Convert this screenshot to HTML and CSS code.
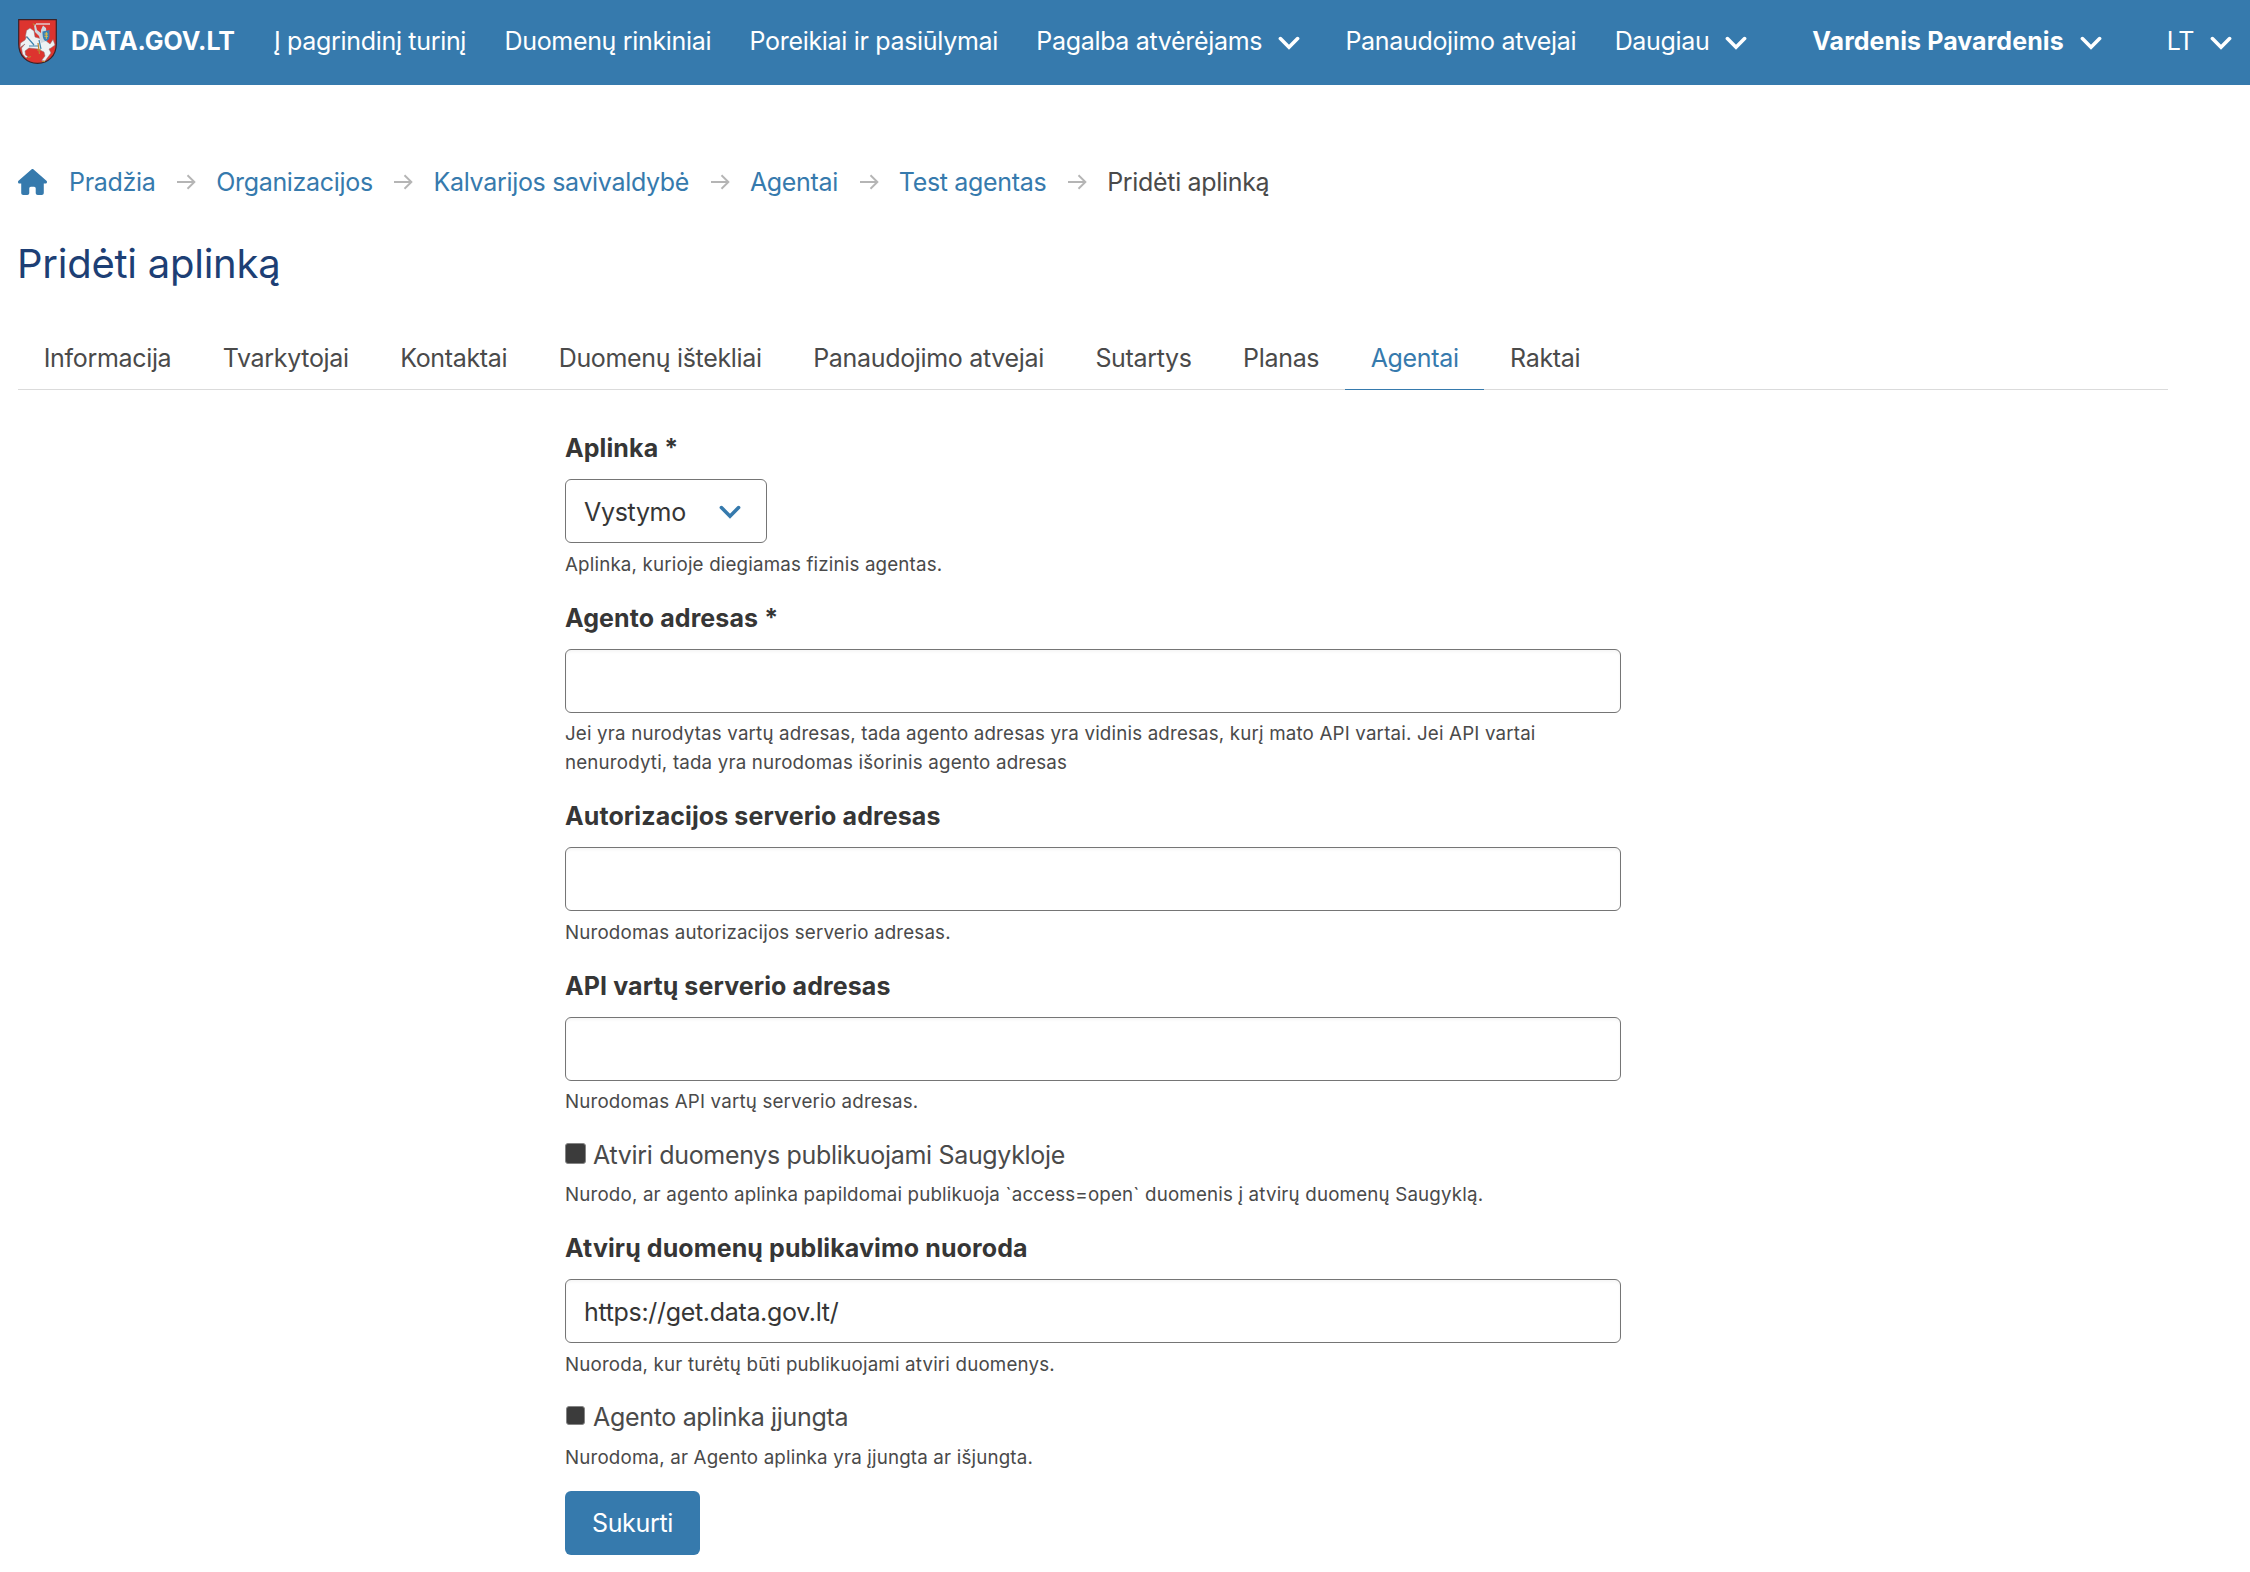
FILE: index.html
```html
<!DOCTYPE html>
<html lang="lt">
<head>
  <meta charset="utf-8">
  <title>Pridėti aplinką</title>
  <link rel="stylesheet" href="styles.css">
</head>
<body>
  <svg class="symbols" width="0" height="0">
    <symbol id="chevron" viewBox="0 0 22 14"><path d="M2.4 2.6 L11 11.2 L19.6 2.6" fill="none" stroke="currentColor" stroke-width="3.6" stroke-linecap="round"/></symbol>
    <symbol id="arrow" viewBox="0 0 20 16"><path d="M1 8 H18 M11.5 1.2 L18.4 8 L11.5 14.8" fill="none" stroke="currentColor" stroke-width="1.9"/></symbol>
  </svg>

  <nav class="navbar">
    <a class="brand" href="#">
      <svg class="logo" viewBox="0 0 39 45">
        <path d="M.7 .7 H38.3 V25 C38.3 37 30 44.3 19.5 44.3 S.7 37 .7 25 Z" fill="#dd342f" stroke="#3a2228" stroke-width="1.2"/>
        <path d="M7.5 17 L8.5 11.5 L12 9 L16 12 L17 18 L27 21 L32 25 L35 20.5 L37 26 L33 29 L31 30 L33 34 L30 38 L27 42 L23.5 41.5 L27 37 L26 33 L20 30 L11 29 L7 32 L7.5 36 L10 37.5 L8 39 L4.5 35 L3.5 29 L7 25 L2 28.5 L2.5 24 L7 21 L9 17 L8 19 Z" fill="#eef1f4" stroke="#8a6a70" stroke-width=".5"/>
        <path d="M18 5 H32" stroke="#e5dfe2" stroke-width="1.3"/>
        <path d="M17.5 5 L19 11 L23 14 V11 L25 6.5 L28 9 L29 22 L23 24 L21 17 L17 13 L16 6 Z" fill="#cfd6df"/>
        <path d="M24.5 12.5 L31.5 11 V18 C31.5 20.5 29 22 27.5 22 C25 20.5 24.5 18 24.5 12.5 Z" fill="#3680b8"/>
        <path d="M28.3 13 V20 M26.5 15 H30 M26.5 17.3 H30" stroke="#e5bd45" stroke-width="1"/>
        <path d="M9 18 L16 26 M11 27 H20 M21 21 L23 30" stroke="#3e83ad" stroke-width="1.2"/>
        <path d="M15 4.5 L16.5 6.5 M20 24 L21.5 35 M19 31 H23 M10 38.5 L13 37.5 M24 42.5 H27" stroke="#bd8731" stroke-width="1.2"/>
      </svg>
      DATA.GOV.LT
    </a>
    <a class="nav-item" href="#">Į pagrindinį turinį</a>
    <a class="nav-item" href="#">Duomenų rinkiniai</a>
    <a class="nav-item" href="#">Poreikiai ir pasiūlymai</a>
    <a class="nav-item dropdown" href="#">Pagalba atvėrėjams<svg class="chevron"><use href="#chevron"/></svg></a>
    <a class="nav-item" href="#">Panaudojimo atvejai</a>
    <a class="nav-item dropdown" href="#">Daugiau<svg class="chevron"><use href="#chevron"/></svg></a>
    <div class="nav-end">
      <a class="nav-item user" href="#">Vardenis Pavardenis<svg class="chevron"><use href="#chevron"/></svg></a>
      <a class="nav-item lang" href="#">LT<svg class="chevron"><use href="#chevron"/></svg></a>
    </div>
  </nav>

  <main class="container">
    <nav class="breadcrumb">
      <svg class="home" viewBox="0 0 576 512"><path fill="currentColor" d="M575.8 255.5c0 18-15 32.1-32 32.1h-32l.7 160.2c0 2.700-.2 5.400-.5 8.100V472c0 22.100-17.900 40-40 40H392c-22.100 0-40-17.900-40-40v-88c0-17.700-14.300-32-32-32h-64c-17.700 0-32 14.300-32 32v88c0 22.100-17.900 40-40 40h-80c-22.100 0-40-17.900-40-40V287.600H32c-18 0-32-14-32-32.100 0-9 3-17 10-24L266.400 8c7-7 15-8 22-8s15 2 21 7l255.400 224.500c8 7 12 15 11 24z"/></svg>
      <a href="#">Pradžia</a>
      <svg class="arrow"><use href="#arrow"/></svg>
      <a href="#">Organizacijos</a>
      <svg class="arrow"><use href="#arrow"/></svg>
      <a href="#">Kalvarijos savivaldybė</a>
      <svg class="arrow"><use href="#arrow"/></svg>
      <a href="#">Agentai</a>
      <svg class="arrow"><use href="#arrow"/></svg>
      <a href="#">Test agentas</a>
      <svg class="arrow"><use href="#arrow"/></svg>
      <span>Pridėti aplinką</span>
    </nav>

    <h1>Pridėti aplinką</h1>

    <div class="tabs">
      <a href="#">Informacija</a>
      <a href="#">Tvarkytojai</a>
      <a href="#">Kontaktai</a>
      <a href="#">Duomenų ištekliai</a>
      <a href="#">Panaudojimo atvejai</a>
      <a href="#">Sutartys</a>
      <a href="#">Planas</a>
      <a href="#" class="active">Agentai</a>
      <a href="#">Raktai</a>
    </div>

    <form>
      <div class="field">
        <label class="label" for="env">Aplinka *</label>
        <div class="select">
          <select id="env"><option>Vystymo</option></select>
          <svg class="chevron"><use href="#chevron"/></svg>
        </div>
        <p class="help">Aplinka, kurioje diegiamas fizinis agentas.</p>
      </div>
      <div class="field">
        <label class="label" for="agent">Agento adresas *</label>
        <input class="input" type="text" id="agent">
        <p class="help">Jei yra nurodytas vartų adresas, tada agento adresas yra vidinis adresas, kurį mato API vartai. Jei API vartai nenurodyti, tada yra nurodomas išorinis agento adresas</p>
      </div>
      <div class="field">
        <label class="label" for="auth">Autorizacijos serverio adresas</label>
        <input class="input" type="text" id="auth">
        <p class="help">Nurodomas autorizacijos serverio adresas.</p>
      </div>
      <div class="field">
        <label class="label" for="api">API vartų serverio adresas</label>
        <input class="input" type="text" id="api">
        <p class="help">Nurodomas API vartų serverio adresas.</p>
      </div>
      <div class="field">
        <label class="checkbox"><input class="large" type="checkbox">Atviri duomenys publikuojami Saugykloje</label>
        <p class="help">Nurodo, ar agento aplinka papildomai publikuoja `access=open` duomenis į atvirų duomenų Saugyklą.</p>
      </div>
      <div class="field">
        <label class="label" for="url">Atvirų duomenų publikavimo nuoroda</label>
        <input class="input" type="text" id="url" value="https://get.data.gov.lt/">
        <p class="help">Nuoroda, kur turėtų būti publikuojami atviri duomenys.</p>
      </div>
      <div class="field">
        <label class="checkbox"><input type="checkbox">Agento aplinka įjungta</label>
        <p class="help">Nurodoma, ar Agento aplinka yra įjungta ar išjungta.</p>
      </div>
      <button class="button" type="submit">Sukurti</button>
    </form>
  </main>
</body>
</html>
```
FILE: styles.css
```css
* { box-sizing: border-box; }
body { margin: 0; background: #fff; color: #4a4a4a; font-family: Inter, "Liberation Sans", sans-serif; font-size: 25px; line-height: 38.4px; letter-spacing: -0.32px; overflow: hidden; }
a { color: #367aad; text-decoration: none; }
.symbols { position: absolute; }
.chevron { width: 22px; height: 14px; flex: none; }

.navbar { display: flex; align-items: center; height: 85px; padding: 0 18px 3px 18px; background: #367aad; white-space: nowrap; }
.navbar a { display: flex; align-items: center; color: #fff; }
.brand { width: 236px; font-weight: 700; letter-spacing: 0; gap: 14px; }
.logo { width: 39px; height: 45px; }
.nav-item { padding: 0 19.2px; }
.brand + .nav-item { padding-left: 20px; }
.nav-item .chevron { margin: 3px 0 0 16px; }
.dropdown { padding-right: 26px; }
.nav-end { display: flex; gap: 65px; margin-left: auto; }
.nav-end .nav-item { padding: 0; }
.user { font-weight: 700; letter-spacing: 0.08px; }

.container { padding: 78px 82px 0 18px; }

.breadcrumb { display: flex; align-items: center; white-space: nowrap; }
.home { width: 29px; height: 26px; margin-right: 22px; color: #367aad; }
.arrow { width: 20px; height: 16px; margin: 0 20.3px 0 20.5px; color: #b5b5b5; }

h1 { margin: 40px 0 0 -1px; color: #1d3f75; font-size: 40px; font-weight: 400; line-height: 46px; letter-spacing: -0.25px; }

.tabs { display: flex; height: 51px; margin-top: 51.6px; border-bottom: 1px solid #dbdbdb; white-space: nowrap; }
.tabs a { height: 51px; padding: 0 25.7px; border-bottom: 1px solid transparent; color: #4a4a4a; }
.tabs .active { color: #367aad; border-bottom-color: #367aad; }

form { width: 1056px; margin: 39px 0 0 547px; }
.field { margin-bottom: 19.2px; }
.label { display: block; margin-bottom: 11.8px; color: #363636; font-weight: 700; letter-spacing: 0.1px; }
.input, select { display: block; width: 100%; height: 64px; margin: 0; padding: 1px 18px 0; border: 1px solid #757575; border-radius: 6px; background: #fff; color: #363636; font: inherit; letter-spacing: inherit; }
.input { box-shadow: inset 0 2px 3px rgba(10, 10, 10, 0.04); }
.select { position: relative; width: 202px; }
select { appearance: none; }
.select .chevron { position: absolute; right: 26px; top: 26px; color: #367aad; }
.help { margin: 7.4px 0 0; font-size: 18.75px; line-height: 28.8px; letter-spacing: 0.165px; }
.checkbox { display: flex; align-items: center; height: 37.6px; }
.checkbox input { appearance: none; width: 19px; height: 19px; margin: 0 8px 3px 1px; border: 1px solid #858585; border-radius: 3px; background: #3b3b3b; }
.checkbox .large { width: 21px; height: 21px; margin: 0 7px 3px 0; }
.button { display: block; width: 135px; height: 64px; margin-top: -1px; padding: 2px 0 0; border: 0; border-radius: 6px; background: #367aad; color: #fff; font: inherit; letter-spacing: inherit; }
```
